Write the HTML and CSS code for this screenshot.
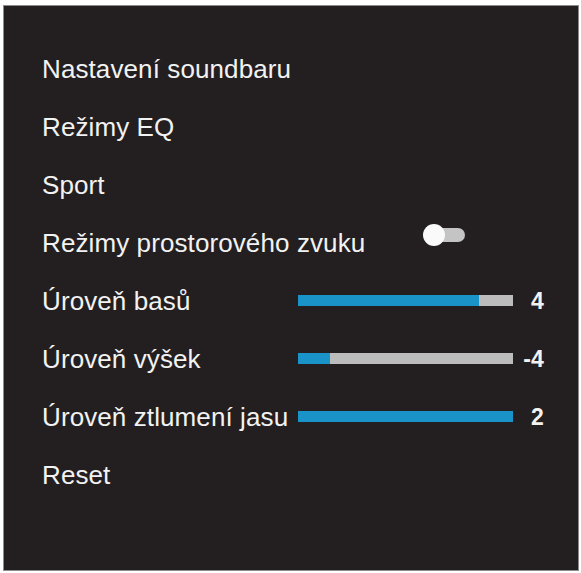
FILE: index.html
```html
<!DOCTYPE html>
<html lang="cs">
<head>
  <meta charset="UTF-8" />
  <meta name="viewport" content="width=device-width, initial-scale=1.0"/>
  <title>Nastavení soundbaru</title>
  <link rel="stylesheet" href="styles.css">
</head>
<body>
  <div class="tv-menu">
    <div class="menu-row">
      <span class="label">Nastavení soundbaru</span>
    </div>
    <div class="menu-row">
      <span class="label">Režimy EQ</span>
    </div>
    <div class="menu-row">
      <span class="label">Sport</span>
    </div>
    <div class="menu-row">
      <span class="label">Režimy prostorového zvuku</span>
      <div class="toggle"><div class="knob"></div></div>
    </div>
    <div class="menu-row">
      <span class="label fixed">Úroveň basů</span>
      <div class="bar"><div class="fill" style="width: 84%"></div></div>
      <span class="value">4</span>
    </div>
    <div class="menu-row">
      <span class="label fixed">Úroveň výšek</span>
      <div class="bar"><div class="fill" style="width: 15%"></div></div>
      <span class="value">-4</span>
    </div>
    <div class="menu-row">
      <span class="label fixed">Úroveň ztlumení jasu</span>
      <div class="bar"><div class="fill" style="width: 100%"></div></div>
      <span class="value">2</span>
    </div>
    <div class="menu-row">
      <span class="label">Reset</span>
    </div>
  </div>
</body>
</html>
```

FILE: styles.css
```css
* {
  box-sizing: border-box;
}

body {
  margin: 0;
  background-color: #fff;
  font-family: "Liberation Sans", Arial, sans-serif;
}

.tv-menu {
  margin: 5px 0 0 3px;
  width: 576px;
  height: 566px;
  border: 1px solid #8c8c8c;
  background-color: #231f20;
  padding: 34px 0 0 38px;
  color: #f2f2f2;
}

.menu-row {
  display: flex;
  align-items: center;
  height: 58px;
  font-size: 26px;
  letter-spacing: 0.1px;
  line-height: 58px;
}

.label {
  white-space: nowrap;
}

.label.fixed {
  width: 256px;
}

.toggle {
  position: relative;
  margin-left: 59px;
  margin-top: -16px;
  width: 41px;
  height: 14px;
  border-radius: 7px;
  background-color: #c4c4c4;
}

.knob {
  position: absolute;
  left: -1px;
  top: -4px;
  width: 22px;
  height: 22px;
  border-radius: 50%;
  background-color: #fafafa;
}

.bar {
  width: 215px;
  height: 11px;
  margin-top: -2px;
  background-color: #bcbcbc;
}

.fill {
  height: 100%;
  background-color: #1a93c9;
}

.value {
  width: 31px;
  text-align: right;
  font-size: 23px;
  font-weight: bold;
}
```
